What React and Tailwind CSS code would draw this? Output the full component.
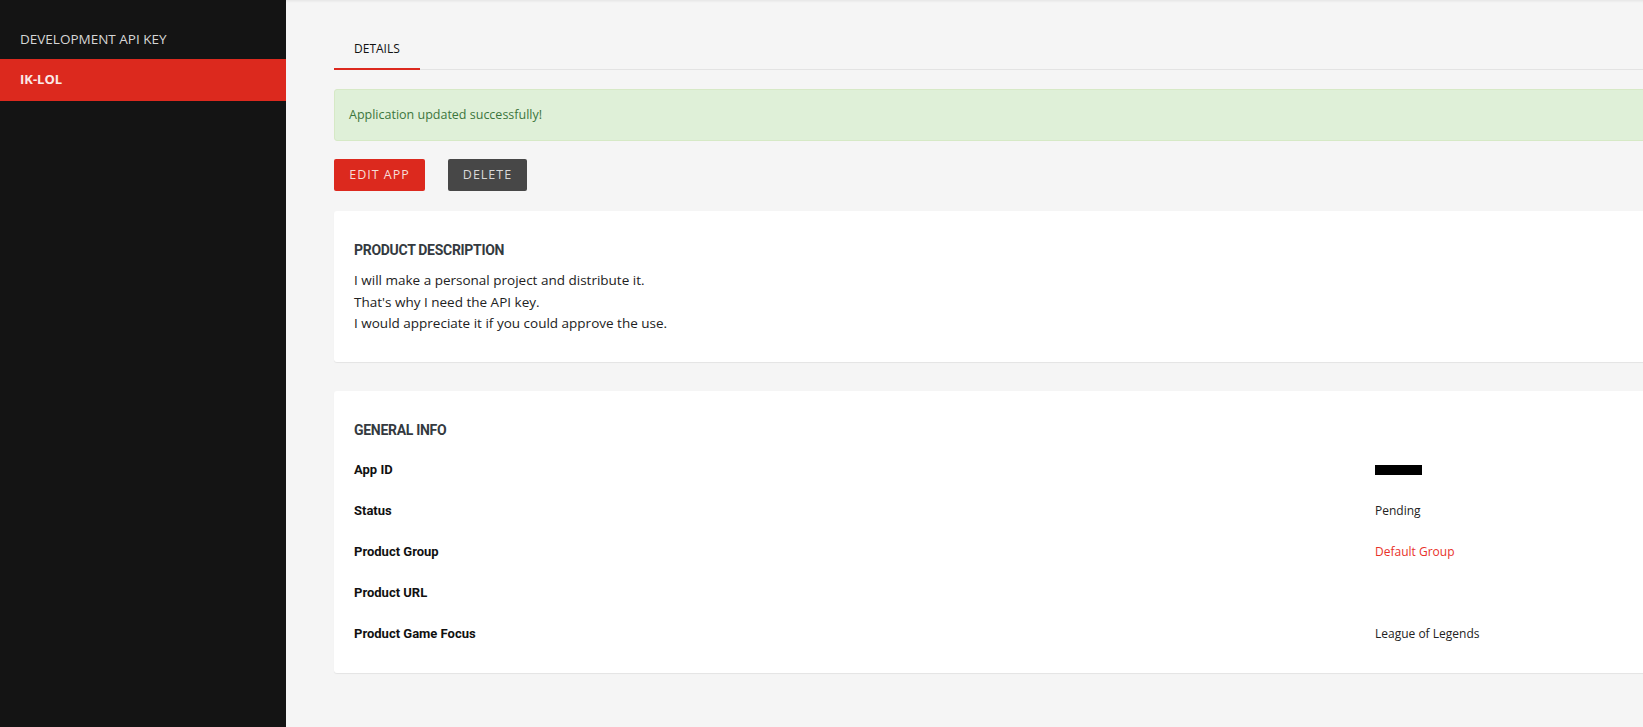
export default function App() {
  const rows = [
    { label: "App ID", value: "redacted" },
    { label: "Status", value: "Pending" },
    { label: "Product Group", value: "Default Group", red: true },
    { label: "Product URL", value: "" },
    { label: "Product Game Focus", value: "League of Legends" },
  ];
  return (
    <div className="flex h-[727px] w-[1643px] overflow-hidden bg-[#f5f5f5]">
      <aside className="w-[286px] shrink-0 bg-[#141414] pt-[19px] font-['Open_Sans',sans-serif]">
        <div className="flex h-[40px] items-center pl-[20px] text-[13.5px] text-[#d6d6d6]">DEVELOPMENT API KEY</div>
        <div className="flex h-[42px] items-center bg-[#dc291e] pl-[20px] text-[13px] font-bold text-[#fbe9e7]">IK-LOL</div>
      </aside>
      <main className="relative min-w-0 flex-1 overflow-hidden pl-[48px] pt-[40px] shadow-[inset_0_3px_3px_-2px_rgba(0,0,0,0.08)]">
        <div className="w-[1400px]">
          <div className="flex border-b border-[#e3e3e3]">
            <div className="-mb-px border-b-2 border-[#dc291e] px-[20px] pb-[10px] font-['Open_Sans',sans-serif] text-[12px] text-[#111]">DETAILS</div>
          </div>
          <div className="mt-[19px] flex h-[52px] items-center rounded-[3px] border border-[#d6e9c6] bg-[#dff0d8] pl-[14px] font-['Open_Sans',sans-serif] text-[12.5px] text-[#3c763d]">
            Application updated successfully!
          </div>
          <div className="mt-[18px] flex gap-[23px] font-['Open_Sans',sans-serif]">
            <button className="flex h-[32px] w-[91px] items-center justify-center rounded-[2px] bg-[#dc291e] text-[12.5px] tracking-[1px] text-[#f7dcd6]">EDIT APP</button>
            <button className="flex h-[32px] w-[79px] items-center justify-center rounded-[2px] bg-[#474747] text-[12.5px] tracking-[1px] text-[#d8d8d8]">DELETE</button>
          </div>
          <section className="mt-[20px] h-[151px] rounded-[3px] bg-white px-[20px] pt-[29px] shadow-[0_1px_1px_rgba(0,0,0,0.07)]">
            <h2 className="font-['Roboto',sans-serif] text-[14px] font-bold tracking-[-0.3px] text-[#343a40]">PRODUCT DESCRIPTION</h2>
            <div className="mt-[9px] font-['Open_Sans',sans-serif] text-[13.5px] leading-[21.5px] text-[#222]">
              <p>I will make a personal project and distribute it.</p>
              <p>That's why I need the API key.</p>
              <p>I would appreciate it if you could approve the use.</p>
            </div>
          </section>
          <section className="mt-[29px] h-[282px] rounded-[3px] bg-white px-[20px] pt-[29px] shadow-[0_1px_1px_rgba(0,0,0,0.07)]">
            <h2 className="font-['Roboto',sans-serif] text-[14px] font-bold tracking-[-0.3px] text-[#343a40]">GENERAL INFO</h2>
            <div className="mt-[8px]">
              {rows.map((r) => (
                <div key={r.label} className="grid h-[41px] grid-cols-[1021px_1fr] items-center">
                  <div className="font-['Roboto',sans-serif] text-[13px] font-bold text-[#111]">{r.label}</div>
                  <div className={`font-['Open_Sans',sans-serif] text-[12px] ${r.red ? "text-[#e8322a]" : "text-[#222]"}`}>
                    {r.label === "App ID" ? <span className="inline-block h-[10px] w-[47px] bg-black align-middle" /> : r.value}
                  </div>
                </div>
              ))}
            </div>
          </section>
        </div>
      </main>
    </div>
  );
}
